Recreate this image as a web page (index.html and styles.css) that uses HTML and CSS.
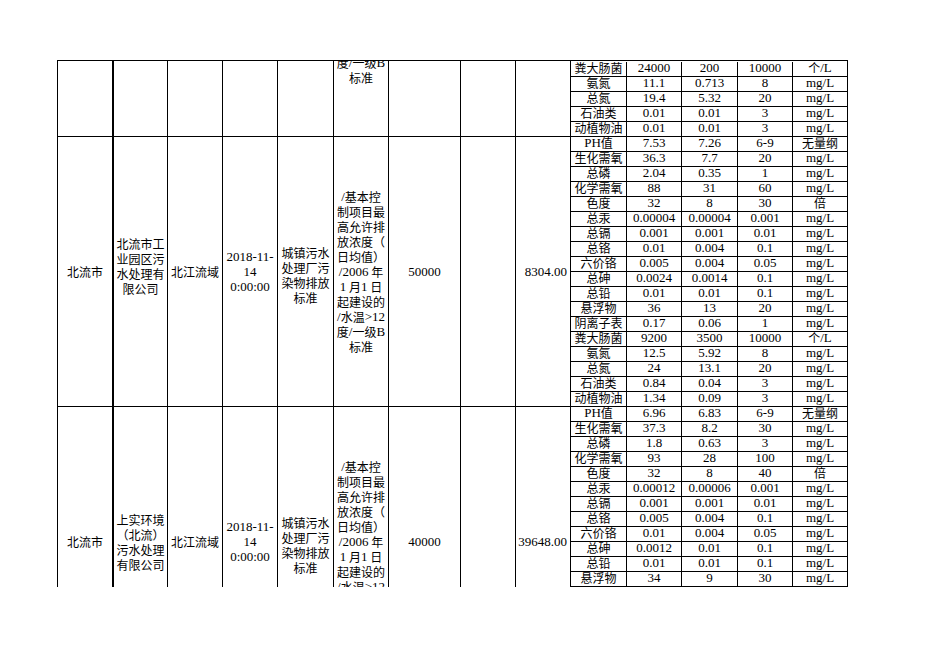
FILE: index.html
```html
<!DOCTYPE html>
<html lang="zh-CN">
<head>
<meta charset="utf-8">
<title>污水处理厂排放数据</title>
<link rel="stylesheet" href="styles.css">
</head>
<body>
<div class="sheet">
<table class="grid">
<colgroup>
<col style="width:57px"><col style="width:54px"><col style="width:55px"><col style="width:55px"><col style="width:56px"><col style="width:55px"><col style="width:72px"><col style="width:55px"><col style="width:55px"><col style="width:56px"><col style="width:55px"><col style="width:56px"><col style="width:55px"><col style="width:55px">
</colgroup>
<tbody>
<!-- section 1 (scrolled, only its last rows are visible) -->
<tr>
<td class="c1 blk" rowspan="6"></td>
<td class="blk" rowspan="6"></td>
<td class="blk" rowspan="6"></td>
<td class="blk" rowspan="6"></td>
<td class="blk" rowspan="6"></td>
<td class="blk tailtext" rowspan="6">
<div class="ln">度<span class="m">/</span>一级<span class="m">B</span></div>
<div class="ln">标准</div>
</td>
<td class="blk" rowspan="6"></td>
<td class="blk" rowspan="6"></td>
<td class="blk" rowspan="6"></td>
<td class="spacer" colspan="5"></td>
</tr>
<tr><td>粪大肠菌</td><td class="num">24000</td><td class="num">200</td><td class="num">10000</td><td>个<span class="m">/L</span></td></tr>
<tr><td>氨氮</td><td class="num">11.1</td><td class="num">0.713</td><td class="num">8</td><td class="num">mg/L</td></tr>
<tr><td>总氮</td><td class="num">19.4</td><td class="num">5.32</td><td class="num">20</td><td class="num">mg/L</td></tr>
<tr><td>石油类</td><td class="num">0.01</td><td class="num">0.01</td><td class="num">3</td><td class="num">mg/L</td></tr>
<tr><td>动植物油</td><td class="num">0.01</td><td class="num">0.01</td><td class="num">3</td><td class="num">mg/L</td></tr>

<!-- section 2 -->
<tr>
<td class="c1 blk" rowspan="18"><div class="ln">北流市</div></td>
<td class="blk lift" rowspan="18">
<div class="ln">北流市工</div>
<div class="ln">业园区污</div>
<div class="ln">水处理有</div>
<div class="ln">限公司</div>
</td>
<td class="blk" rowspan="18"><div class="ln">北江流域</div></td>
<td class="blk" rowspan="18">
<div class="ln mono">2018-11-</div>
<div class="ln mono">14</div>
<div class="ln mono">0:00:00</div>
</td>
<td class="blk drop" rowspan="18">
<div class="ln">城镇污水</div>
<div class="ln">处理厂污</div>
<div class="ln">染物排放</div>
<div class="ln">标准</div>
</td>
<td class="blk" rowspan="18">
<div class="ln"><span class="m">/</span>基本控</div>
<div class="ln">制项目最</div>
<div class="ln">高允许排</div>
<div class="ln">放浓度（</div>
<div class="ln">日均值）</div>
<div class="ln"><span class="m">/2006</span> 年</div>
<div class="ln"><span class="m">1</span> 月<span class="m">1</span> 日</div>
<div class="ln">起建设的</div>
<div class="ln"><span class="m">/</span>水温<span class="m">&gt;12</span></div>
<div class="ln">度<span class="m">/</span>一级<span class="m">B</span></div>
<div class="ln">标准</div>
</td>
<td class="blk" rowspan="18"><div class="ln mono">50000</div></td>
<td class="blk" rowspan="18"></td>
<td class="blk right" rowspan="18"><div class="ln mono">8304.00</div></td>
<td><span class="m">PH</span>值</td><td class="num">7.53</td><td class="num">7.26</td><td class="num">6-9</td><td>无量纲</td>
</tr>
<tr><td>生化需氧</td><td class="num">36.3</td><td class="num">7.7</td><td class="num">20</td><td class="num">mg/L</td></tr>
<tr><td>总磷</td><td class="num">2.04</td><td class="num">0.35</td><td class="num">1</td><td class="num">mg/L</td></tr>
<tr><td>化学需氧</td><td class="num">88</td><td class="num">31</td><td class="num">60</td><td class="num">mg/L</td></tr>
<tr><td>色度</td><td class="num">32</td><td class="num">8</td><td class="num">30</td><td>倍</td></tr>
<tr><td>总汞</td><td class="num">0.00004</td><td class="num">0.00004</td><td class="num">0.001</td><td class="num">mg/L</td></tr>
<tr><td>总镉</td><td class="num">0.001</td><td class="num">0.001</td><td class="num">0.01</td><td class="num">mg/L</td></tr>
<tr><td>总铬</td><td class="num">0.01</td><td class="num">0.004</td><td class="num">0.1</td><td class="num">mg/L</td></tr>
<tr><td>六价铬</td><td class="num">0.005</td><td class="num">0.004</td><td class="num">0.05</td><td class="num">mg/L</td></tr>
<tr><td>总砷</td><td class="num">0.0024</td><td class="num">0.0014</td><td class="num">0.1</td><td class="num">mg/L</td></tr>
<tr><td>总铅</td><td class="num">0.01</td><td class="num">0.01</td><td class="num">0.1</td><td class="num">mg/L</td></tr>
<tr><td>悬浮物</td><td class="num">36</td><td class="num">13</td><td class="num">20</td><td class="num">mg/L</td></tr>
<tr><td>阴离子表</td><td class="num">0.17</td><td class="num">0.06</td><td class="num">1</td><td class="num">mg/L</td></tr>
<tr><td>粪大肠菌</td><td class="num">9200</td><td class="num">3500</td><td class="num">10000</td><td>个<span class="m">/L</span></td></tr>
<tr><td>氨氮</td><td class="num">12.5</td><td class="num">5.92</td><td class="num">8</td><td class="num">mg/L</td></tr>
<tr><td>总氮</td><td class="num">24</td><td class="num">13.1</td><td class="num">20</td><td class="num">mg/L</td></tr>
<tr><td>石油类</td><td class="num">0.84</td><td class="num">0.04</td><td class="num">3</td><td class="num">mg/L</td></tr>
<tr><td>动植物油</td><td class="num">1.34</td><td class="num">0.09</td><td class="num">3</td><td class="num">mg/L</td></tr>

<!-- section 3 -->
<tr>
<td class="c1 blk" rowspan="13"><div class="ln">北流市</div></td>
<td class="blk" rowspan="13">
<div class="ln">上实环境</div>
<div class="ln">（北流）</div>
<div class="ln">污水处理</div>
<div class="ln">有限公司</div>
</td>
<td class="blk" rowspan="13"><div class="ln">北江流域</div></td>
<td class="blk" rowspan="13">
<div class="ln mono">2018-11-</div>
<div class="ln mono">14</div>
<div class="ln mono">0:00:00</div>
</td>
<td class="blk drop" rowspan="13">
<div class="ln">城镇污水</div>
<div class="ln">处理厂污</div>
<div class="ln">染物排放</div>
<div class="ln">标准</div>
</td>
<td class="blk" rowspan="13">
<div class="ln"><span class="m">/</span>基本控</div>
<div class="ln">制项目最</div>
<div class="ln">高允许排</div>
<div class="ln">放浓度（</div>
<div class="ln">日均值）</div>
<div class="ln"><span class="m">/2006</span> 年</div>
<div class="ln"><span class="m">1</span> 月<span class="m">1</span> 日</div>
<div class="ln">起建设的</div>
<div class="ln"><span class="m">/</span>水温<span class="m">&gt;12</span></div>
<div class="ln">度<span class="m">/</span>一级<span class="m">B</span></div>
<div class="ln">标准</div>
</td>
<td class="blk" rowspan="13"><div class="ln mono">40000</div></td>
<td class="blk" rowspan="13"></td>
<td class="blk right" rowspan="13"><div class="ln mono">39648.00</div></td>
<td><span class="m">PH</span>值</td><td class="num">6.96</td><td class="num">6.83</td><td class="num">6-9</td><td>无量纲</td>
</tr>
<tr><td>生化需氧</td><td class="num">37.3</td><td class="num">8.2</td><td class="num">30</td><td class="num">mg/L</td></tr>
<tr><td>总磷</td><td class="num">1.8</td><td class="num">0.63</td><td class="num">3</td><td class="num">mg/L</td></tr>
<tr><td>化学需氧</td><td class="num">93</td><td class="num">28</td><td class="num">100</td><td class="num">mg/L</td></tr>
<tr><td>色度</td><td class="num">32</td><td class="num">8</td><td class="num">40</td><td>倍</td></tr>
<tr><td>总汞</td><td class="num">0.00012</td><td class="num">0.00006</td><td class="num">0.001</td><td class="num">mg/L</td></tr>
<tr><td>总镉</td><td class="num">0.001</td><td class="num">0.001</td><td class="num">0.01</td><td class="num">mg/L</td></tr>
<tr><td>总铬</td><td class="num">0.005</td><td class="num">0.004</td><td class="num">0.1</td><td class="num">mg/L</td></tr>
<tr><td>六价铬</td><td class="num">0.01</td><td class="num">0.004</td><td class="num">0.05</td><td class="num">mg/L</td></tr>
<tr><td>总砷</td><td class="num">0.0012</td><td class="num">0.01</td><td class="num">0.1</td><td class="num">mg/L</td></tr>
<tr><td>总铅</td><td class="num">0.01</td><td class="num">0.01</td><td class="num">0.1</td><td class="num">mg/L</td></tr>
<tr><td>悬浮物</td><td class="num">34</td><td class="num">9</td><td class="num">30</td><td class="num">mg/L</td></tr>
<tr><td class="tail" colspan="5"></td></tr>
</tbody>
</table>
</div>
</body>
</html>
```

FILE: styles.css
```css
html, body {
  margin: 0;
  padding: 0;
  background: #ffffff;
}

body {
  font-family: "Noto Sans CJK SC", sans-serif;
  color: #000000;
}

/* visible window of the sheet, scrolled part-way into the first record */
.sheet {
  margin: 60px 0 0 57px;
  width: 791px;
  height: 526px;
  overflow: hidden;
  border-top: 1px solid #000000;
}

.grid {
  table-layout: fixed;
  width: 791px;
  border-collapse: separate;
  border-spacing: 0;
  margin-top: -195px;
}

.grid td {
  padding: 0;
  border-right: 1px solid #000000;
  border-bottom: 1px solid #000000;
  box-sizing: border-box;
  height: 15px;
  font-size: 12px;
  line-height: 12px;
  text-align: center;
  vertical-align: top;
  white-space: nowrap;
}

.grid td.c1 {
  border-left: 1px solid #000000;
  border-right-width: 2px;
}

.grid td.blk {
  vertical-align: middle;
  height: auto;
}

/* only the tail of the first record's standard text is inside the window */
.grid td.tailtext {
  vertical-align: bottom;
  padding-bottom: 51px;
}

.grid td.num {
  font-family: "Liberation Serif", serif;
  font-size: 13px;
}

.grid td.spacer {
  height: 196px;
  border-bottom: 0;
}

.grid td.tail {
  height: 90px;
}

.grid td.right {
  text-align: right;
  padding-right: 3px;
}

.grid td.lift {
  padding-bottom: 11px;
}

.grid td.drop {
  padding-top: 6px;
}

.m {
  font-family: "Liberation Serif", serif;
  font-size: 13px;
  line-height: 6px;
  vertical-align: 1px;
}

.ln {
  height: 15px;
  line-height: 15px;
}

.ln.mono {
  font-family: "Liberation Serif", serif;
  font-size: 13px;
}
```
